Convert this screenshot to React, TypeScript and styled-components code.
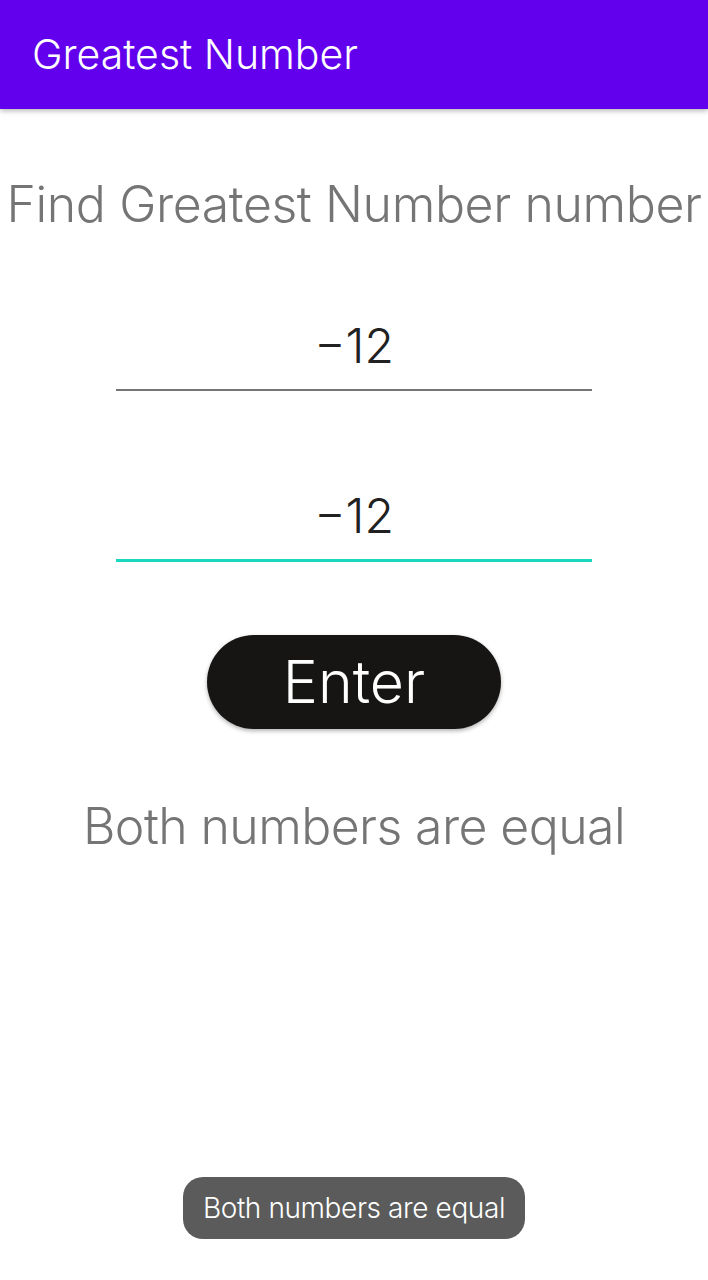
import React from "react";
import styled, { createGlobalStyle } from "styled-components";

const Global = createGlobalStyle`
  html, body { margin: 0; padding: 0; background: #ffffff; }
  body { font-family: Inter, Roboto, "Noto Sans", Arial, sans-serif; }
  * { box-sizing: border-box; }
`;

const Screen = styled.div`
  width: 708px;
  height: 1280px;
  display: flex;
  flex-direction: column;
  background: #ffffff;
  overflow: hidden;
`;

const AppBar = styled.header`
  height: 109px;
  flex: none;
  background: #6200ee;
  display: flex;
  align-items: center;
  padding: 0 32px 2px;
  box-shadow: 0 2px 5px rgba(0, 0, 0, 0.28);
  position: relative;
  z-index: 1;
`;

const Title = styled.h1`
  margin: 0;
  color: #ffffff;
  font-size: 41px;
  font-weight: 300;
  letter-spacing: 0;
`;

const Content = styled.main`
  display: flex;
  flex-direction: column;
  align-items: center;
`;

const Heading = styled.h2`
  margin: 65px 0 0;
  color: #757575;
  font-size: 50px;
  line-height: 60px;
  font-weight: 300;
  letter-spacing: -0.4px;
  white-space: nowrap;
`;

const Field = styled.input<{ $focused?: boolean }>`
  width: 476px;
  height: 84px;
  margin-top: ${(p) => (p.$focused ? "87px" : "73px")};
  border: none;
  border-bottom: ${(p) => (p.$focused ? "3px solid #18d8c0" : "2px solid #757575")};
  outline: none;
  background: transparent;
  text-align: center;
  font-family: Inter, Roboto, "Noto Sans", Arial, sans-serif;
  font-size: 48px;
  font-weight: 300;
  color: #212121;
  padding: 0 0 6px;
`;

const EnterButton = styled.button`
  margin-top: 73px;
  width: 294px;
  height: 94px;
  border: none;
  border-radius: 47px;
  background: #161514;
  color: #ffffff;
  font-family: Inter, Roboto, "Noto Sans", Arial, sans-serif;
  font-size: 59px;
  font-weight: 300;
  padding: 0 0 2px;
  box-shadow: 0 2px 4px rgba(0, 0, 0, 0.3);
`;

const Result = styled.p`
  margin: 67px 0 0;
  color: #757575;
  font-size: 50px;
  line-height: 60px;
  font-weight: 300;
  letter-spacing: -0.6px;
`;

const Toast = styled.div`
  position: fixed;
  left: 183px;
  top: 1177px;
  width: 342px;
  height: 62px;
  border-radius: 20px;
  background: #5b5b5b;
  color: #ffffff;
  display: flex;
  align-items: center;
  justify-content: center;
  font-size: 28px;
  font-weight: 300;
  letter-spacing: -0.4px;
`;

export default function App() {
  return (
    <Screen>
      <Global />
      <AppBar>
        <Title>Greatest Number</Title>
      </AppBar>
      <Content>
        <Heading>Find Greatest Number number</Heading>
        <Field readOnly value="−12" />
        <Field readOnly value="−12" $focused />
        <EnterButton>Enter</EnterButton>
        <Result>Both numbers are equal</Result>
      </Content>
      <Toast>Both numbers are equal</Toast>
    </Screen>
  );
}
